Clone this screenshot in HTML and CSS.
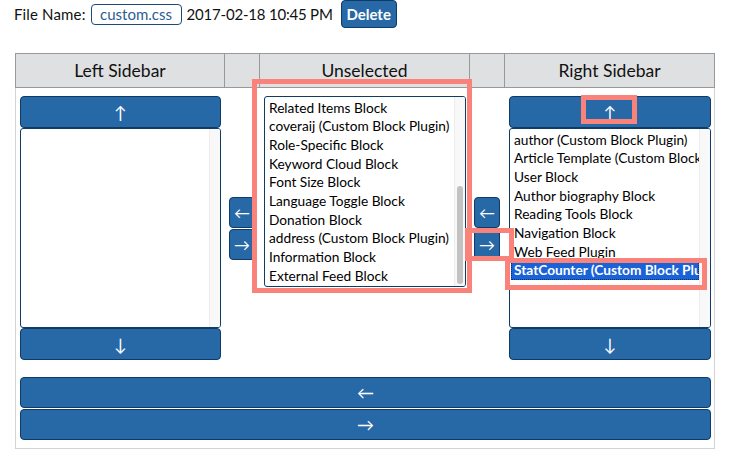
FILE: index.html
```html
<!DOCTYPE html>
<html>
<head>
<meta charset="utf-8">
<link rel="stylesheet" href="styles.css">
</head>
<body>
<div class="fileline">
  <span class="label">File Name:</span>
  <span class="fname">custom.css</span>
  <span class="date">2017-02-18 10:45 PM</span>
  <button class="btn del">Delete</button>
</div>

<div class="board">
  <div class="head">
    <div class="hcell">Left Sidebar</div>
    <div class="hcell"></div>
    <div class="hcell">Unselected</div>
    <div class="hcell"></div>
    <div class="hcell last">Right Sidebar</div>
  </div>
  <div class="body">
    <div class="cols">
      <div class="side side-left">
        <button class="btn tall up">&#8593;</button>
        <div class="list side-list">
          <div class="items"></div>
          <div class="track"></div>
        </div>
        <button class="btn tall down">&#8595;</button>
      </div>
      <div class="gap gap-left">
        <button class="btn small">&#8592;</button>
        <button class="btn small">&#8594;</button>
      </div>
      <div class="mid">
        <div class="list unsel-list">
          <div class="items unsel-items">
            <div class="item">Related Items Block</div>
            <div class="item">coveraij (Custom Block Plugin)</div>
            <div class="item">Role-Specific Block</div>
            <div class="item">Keyword Cloud Block</div>
            <div class="item">Font Size Block</div>
            <div class="item">Language Toggle Block</div>
            <div class="item">Donation Block</div>
            <div class="item">address (Custom Block Plugin)</div>
            <div class="item">Information Block</div>
            <div class="item">External Feed Block</div>
          </div>
          <div class="track"><div class="thumb"></div></div>
        </div>
      </div>
      <div class="gap gap-right">
        <button class="btn small">&#8592;</button>
        <button class="btn small">&#8594;</button>
      </div>
      <div class="side side-right">
        <button class="btn tall up">&#8593;</button>
        <div class="list side-list">
          <div class="items right-items">
            <div class="item">author (Custom Block Plugin)</div>
            <div class="item">Article Template (Custom Block Plugin)</div>
            <div class="item">User Block</div>
            <div class="item">Author biography Block</div>
            <div class="item">Reading Tools Block</div>
            <div class="item">Navigation Block</div>
            <div class="item">Web Feed Plugin</div>
            <div class="item selected">StatCounter (Custom Block Plugin)</div>
          </div>
          <div class="track"></div>
        </div>
        <button class="btn tall down">&#8595;</button>
      </div>
    </div>
    <div class="wide">
      <button class="btn widebtn">&#8592;</button>
      <button class="btn widebtn">&#8594;</button>
    </div>
  </div>
</div>

<div class="mark mark-unsel"></div>
<div class="mark mark-move"></div>
<div class="mark mark-up"></div>
<div class="mark mark-stat"></div>
</body>
</html>
```

FILE: styles.css
```css
* { box-sizing: border-box; }

body {
  margin: 0;
  font-family: "Lato", "Liberation Sans", sans-serif;
  color: #111;
  background: #fff;
  position: relative;
  width: 731px;
  height: 459px;
  overflow: hidden;
}

.fileline {
  display: flex;
  align-items: center;
  height: 28px;
  padding-left: 14px;
  font-size: 15px;
}

.label { letter-spacing: 0.15px; }

.fname {
  margin-left: 5px;
  height: 21px;
  width: 91px;
  border: 1px solid #1d4a78;
  border-radius: 4px;
  color: #2b5e93;
  display: flex;
  align-items: center;
  justify-content: center;
  padding-bottom: 1px;
}

.date { margin-left: 5px; letter-spacing: -0.2px; }

.btn {
  background: #2769a6;
  border: 1px solid #0f3b66;
  border-radius: 4px;
  color: #fff;
  font-family: "Lato", "DejaVu Sans", sans-serif;
  padding: 0;
  margin: 0;
  cursor: pointer;
}

.del {
  margin-left: 8px;
  width: 56px;
  height: 28px;
  font-weight: bold;
  font-size: 15px;
  margin-top: -1px;
}

.board {
  width: 700px;
  margin: 25px 0 0 15px;
}

.head {
  display: grid;
  grid-template-columns: 209px 35px 210px 35px 211px;
  height: 35px;
}

.hcell {
  background: #dfe0e2;
  border-top: 1px solid #999;
  border-bottom: 1px solid #999;
  border-left: 1px solid #999;
  display: flex;
  align-items: center;
  justify-content: center;
  font-size: 17.5px;
  color: #111;
  padding-bottom: 1px;
}
.hcell.last { border-right: 1px solid #999; }

.body {
  border: 1px solid #d3d3d3;
  border-top: none;
  padding: 8px 3px 8px 0;
}

.cols {
  display: grid;
  grid-template-columns: 208px 35px 210px 35px 210px;
  align-items: center;
}

.side {
  display: flex;
  flex-direction: column;
}
.side-left { padding-left: 4px; width: 205px; }
.side-right { padding-left: 5px; width: 207px; }

.tall {
  height: 32px;
  font-size: 17px;
  width: 100%;
}

.list {
  background: #fff;
  border: 1px solid #0f3b66;
  border-radius: 3px;
  display: flex;
  overflow: hidden;
  font-family: "Lato", "Liberation Sans", sans-serif;
  font-size: 13.7px;
  color: #000;
}

.side-list { height: 200px; }

.items {
  flex: 1;
  overflow: hidden;
  white-space: nowrap;
}

.track {
  width: 11px;
  background: #f8f8f8;
  border-left: 1px solid #ececec;
  position: relative;
}

.gap {
  display: flex;
  flex-direction: column;
  gap: 1px;
}
.gap-left { padding-left: 5px; }
.gap-right { padding-left: 5px; }

.small {
  width: 26px;
  height: 31px;
  font-size: 16px;
}

.mid {
  align-self: start;
  padding-left: 5px;
}

.unsel-list {
  width: 202px;
  height: 191px;
}

.unsel-items { padding: 1.5px 0 0 4px; }
.right-items { padding: 1.5px 0 0 0; }
.right-items .item { padding-left: 4px; }

.item {
  line-height: 18.7px;
  height: 18.7px;
}

.item.selected {
  background: #1a62d8;
  color: #fff;
  font-weight: bold;
  outline: 1px dotted #0b2f6a;
  outline-offset: -1px;
  margin-left: 1px;
  padding-left: 3px;
}

.thumb {
  position: absolute;
  left: 2px;
  top: 89px;
  width: 6px;
  height: 98px;
  border-radius: 3px;
  background: #c2c2c2;
}

.wide {
  display: flex;
  flex-direction: column;
  gap: 1px;
  margin: 17px 0 0 4px;
}

.widebtn {
  height: 31px;
  width: 691px;
  font-size: 17px;
}

/* annotation boxes drawn over the screenshot */
.mark {
  position: absolute;
  border: 5px solid #f9837a;
  pointer-events: none;
}
.mark-unsel { left: 252px; top: 79px; width: 220px; height: 214px; }
.mark-move { left: 465px; top: 228px; width: 49px; height: 33px; }
.mark-up { left: 581px; top: 95px; width: 56px; height: 29px; }
.mark-stat { left: 505px; top: 258px; width: 202px; height: 32px; }
```
